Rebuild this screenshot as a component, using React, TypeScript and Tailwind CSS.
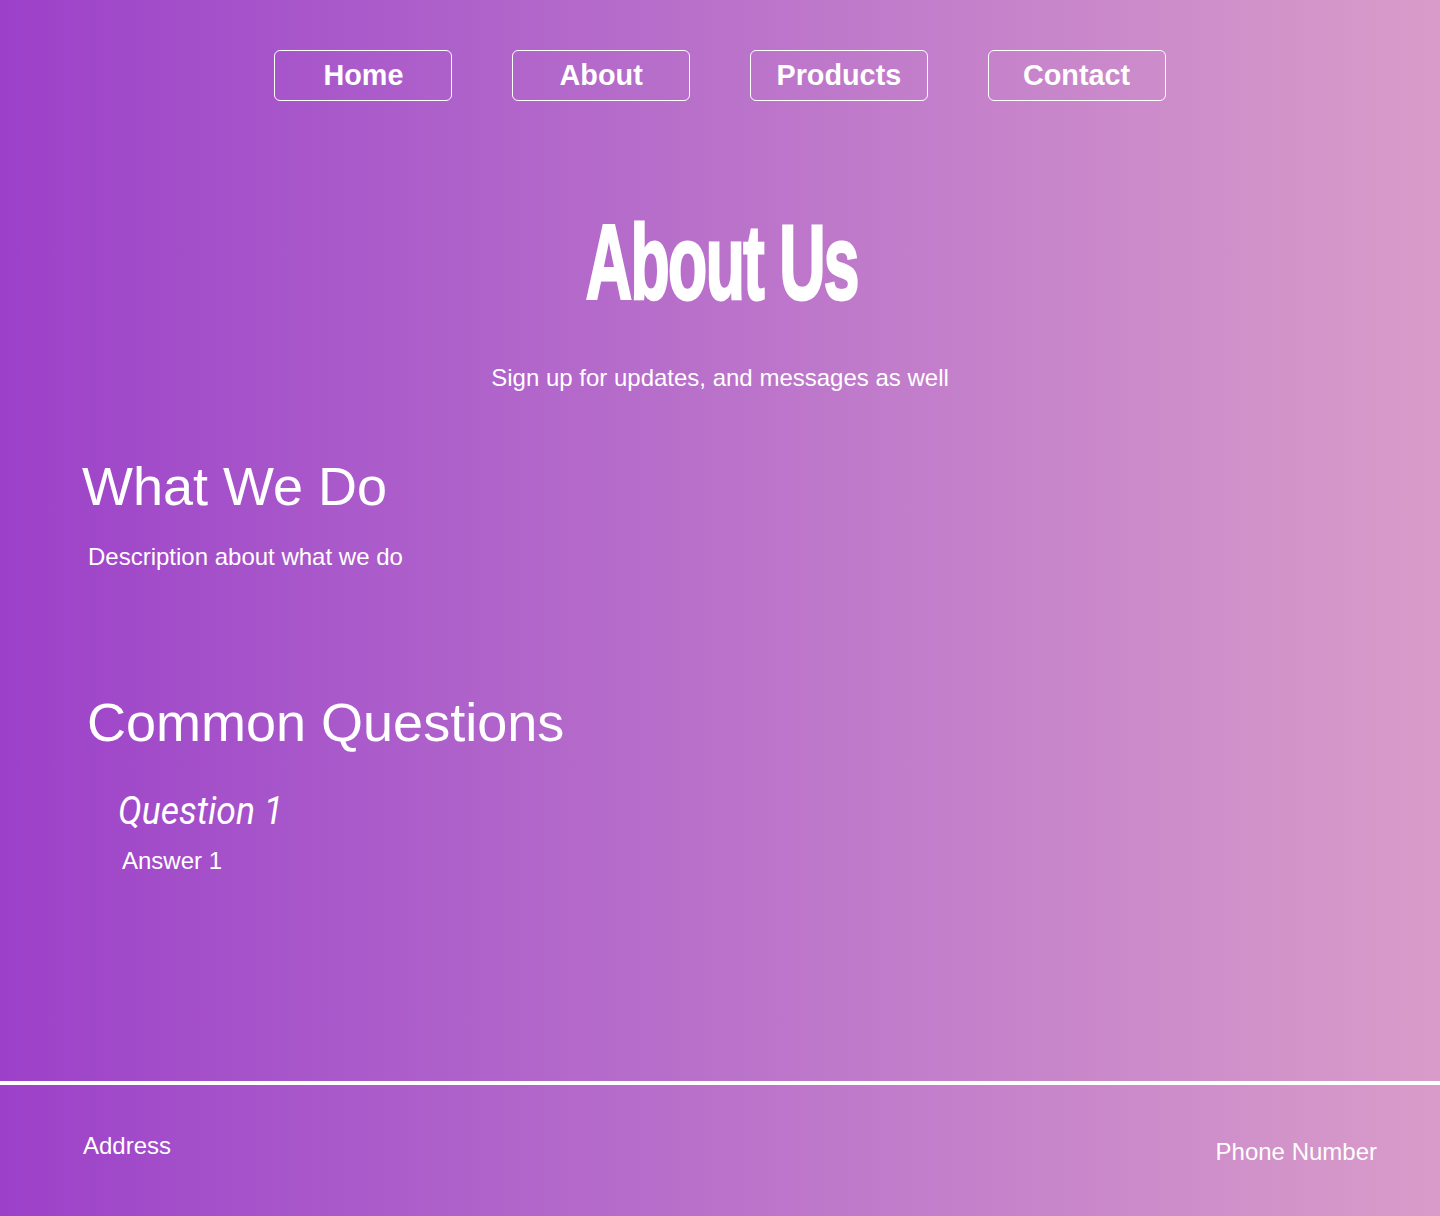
const navItems = ["Home", "About", "Products", "Contact"];

export default function App() {
  return (
    <div className="min-h-screen flex flex-col bg-linear-to-r from-[#9c40c9] to-[#d99cc9] text-white font-['Liberation_Sans',Arial,sans-serif]">
      <main className="flex-1">
        {/* Top navigation */}
        <nav className="flex justify-center gap-[59.7px] pt-[50px]">
          {navItems.map((item) => (
            <a
              key={item}
              href="#"
              className="w-[178px] h-[51px] flex items-center justify-center border border-white rounded-md text-[28.8px] font-bold"
            >
              {item}
            </a>
          ))}
        </nav>

        {/* Hero */}
        <h1 className="mt-[125px] h-[75px] text-center text-[75px] leading-none font-bold tracking-tight">
          <span className="inline-block scale-x-[0.855] scale-y-[1.4] pl-[4px] [-webkit-text-stroke:2px_white]">About Us</span>
        </h1>
        <p className="mt-[63px] text-center text-[24px] leading-[28px]">
          Sign up for updates, and messages as well
        </p>

        {/* What we do */}
        <section>
          <h2 className="mt-[67px] pl-[82px] text-[54px] leading-none">What We Do</h2>
          <p className="mt-[30px] pl-[88px] text-[24px] leading-[28px]">Description about what we do</p>
        </section>

        {/* FAQ */}
        <section>
          <h2 className="mt-[124px] pl-[87px] text-[54px] leading-none">Common Questions</h2>
          <div className="pl-[118px]">
            <h3 className="mt-[43px] text-[39px] leading-none italic font-['Roboto',sans-serif]">
              <span className="inline-block origin-left scale-x-[0.91]">Question 1</span>
            </h3>
            <p className="mt-[16px] pl-[4px] text-[24px] leading-[28px]">Answer 1</p>
          </div>
        </section>
      </main>

      {/* Footer */}
      <footer className="h-[135px] border-t-4 border-white flex justify-between items-start pl-[83px] pr-[63px] text-[24px] leading-[28px]">
        <span className="pt-[47px]">Address</span>
        <span className="pt-[53px]">Phone Number</span>
      </footer>
    </div>
  );
}
